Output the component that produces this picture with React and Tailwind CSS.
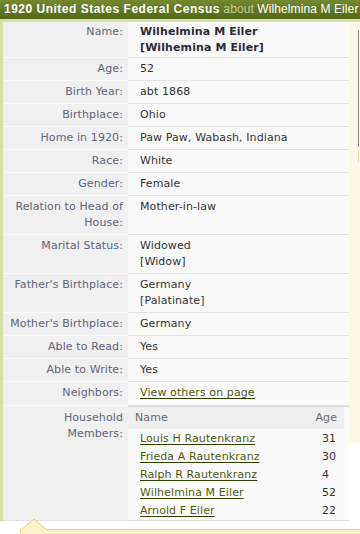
import React from "react";

const rows = [
  { label: ["Age:"], value: ["52"] },
  { label: ["Birth Year:"], value: ["abt 1868"] },
  { label: ["Birthplace:"], value: ["Ohio"] },
  { label: ["Home in 1920:"], value: ["Paw Paw, Wabash, Indiana"] },
  { label: ["Race:"], value: ["White"] },
  { label: ["Gender:"], value: ["Female"] },
  { label: ["Relation to Head of", "House:"], value: ["Mother-in-law"] },
  { label: ["Marital Status:"], value: ["Widowed", "[Widow]"] },
  { label: ["Father's Birthplace:"], value: ["Germany", "[Palatinate]"] },
  { label: ["Mother's Birthplace:"], value: ["Germany"] },
  { label: ["Able to Read:"], value: ["Yes"] },
  { label: ["Able to Write:"], value: ["Yes"] },
];

const members = [
  ["Louis H Rautenkranz", "31"],
  ["Frieda A Rautenkranz", "30"],
  ["Ralph R Rautenkranz", "4"],
  ["Wilhelmina M Eiler", "52"],
  ["Arnold F Eiler", "22"],
];

const linkCls =
  "text-[#525a14] underline decoration-[#2f4000] underline-offset-[2px] cursor-pointer";

function Row({ label, children, pt = "pt-[3px]", pb = "pb-[3px]" }) {
  return (
    <div className="flex">
      <div
        className={`w-[125px] shrink-0 bg-[#f0f0f0] border-b border-[#fafafa] pr-[5px] text-right text-[#62647a] ${pt} ${pb}`}
      >
        {label.map((l, i) => (
          <div key={i} className="whitespace-nowrap">
            {l}
          </div>
        ))}
      </div>
      <div
        className={`flex-1 bg-[#fafafa] border-b border-[#e4e4e4] pl-[12px] text-[#333333] ${pt} ${pb}`}
      >
        {children}
      </div>
    </div>
  );
}

export default function App() {
  return (
    <div
      className="relative w-[360px] h-[534px] overflow-hidden bg-white text-[11px] leading-[16px] tracking-[0.1px]"
      style={{ fontFamily: "'DejaVu Sans', Verdana, sans-serif" }}
    >
      {/* header */}
      <div
        className="h-[19px] leading-[19px] px-[4px] bg-gradient-to-b from-[#74892e] to-[#53671a] text-white text-[12px] whitespace-nowrap"
        style={{ fontFamily: "'Liberation Sans', Arial, sans-serif" }}
      >
        <span className="font-bold tracking-[0.5px]">1920 United States Federal Census</span>{" "}
        <span className="text-[#c9c98e] tracking-[0.1px]">about</span>{" "}
        <span className="tracking-[0.1px]">Wilhelmina M Eiler</span>
      </div>
      <div className="h-[3px] bg-[#d6dea7]" />

      <div className="flex">
        <div className="w-[3px] shrink-0 bg-[#d6dea7]" />
        <div className="w-[346px] shrink-0 flex flex-col">
          <Row label={["Name:"]} pt="pt-[2px]" pb="pb-[1px]">
            <div className="font-bold text-[#2b2b38]">Wilhelmina M Eiler</div>
            <div className="font-bold text-[#2b2b38]">[Wilhemina M Eiler]</div>
          </Row>
          {rows.map((r, i) => (
            <Row key={i} label={r.label}>
              {r.value.map((v, j) => (
                <div key={j}>{v}</div>
              ))}
            </Row>
          ))}
          <Row label={["Neighbors:"]} pb="pb-[4px]">
            <span className={linkCls}>View others on page</span>
          </Row>
          {/* household */}
          <div className="flex">
            <div className="w-[125px] shrink-0 bg-[#f0f0f0] border-b border-[#e2e2e2] pr-[5px] pt-[4px] text-right text-[#62647a]">
              <div>Household</div>
              <div>Members:</div>
            </div>
            <div className="flex-1 bg-[#fafafa] border-t border-b border-[#dcdcdc]">
              <div className="mr-[5px] h-[22px] bg-[#efefef] flex items-center justify-between pl-[7px] pr-[7px] text-[#6a6a72]">
                <span>Name</span>
                <span>Age</span>
              </div>
              <div className="pt-[1px]">
                {members.map(([n, a], i) => (
                  <div key={i} className="flex h-[18px] items-center">
                    <div className="w-[194px] pl-[12px]">
                      <span className={linkCls}>{n}</span>
                    </div>
                    <div className="text-[#333333]">{a}</div>
                  </div>
                ))}
              </div>
            </div>
          </div>
          <div className="flex-1 bg-[#f9f9f9]" />
        </div>
        <div className="relative w-[11px] shrink-0">
          <div className="h-[421px] bg-[#fdf7e6]" />
          <div className="absolute left-[9px] top-[8px] w-[1px] h-[117px] bg-[#8a8a8a]" />
          <div className="absolute left-[9px] top-[128px] w-[1px] h-[12px] bg-[#e9d98a]" />
        </div>
      </div>

      {/* callout pointer box */}
      <svg
        className="absolute left-[20px] top-[518px]"
        width="340"
        height="16"
        viewBox="0 0 340 16"
      >
        <path
          d="M0.5 16 L0.5 11.5 L1 11.5 L14 1 L27 11.5 L340 11.5 L340 16 Z"
          fill="#f9f4c9"
        />
        <path
          d="M0.5 16 L0.5 11.5 L1.5 11.5 L14 1 L26.5 11.5 L340 11.5"
          fill="none"
          stroke="#e2cf80"
          strokeWidth="1"
        />
      </svg>
    </div>
  );
}
